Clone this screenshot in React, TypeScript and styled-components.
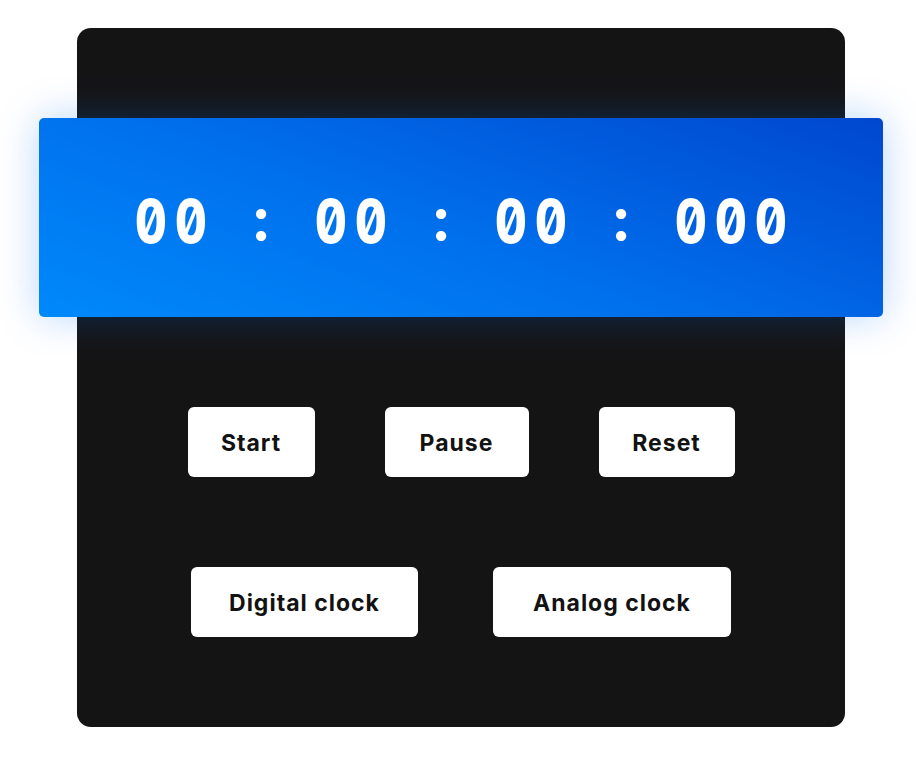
import React from "react";
import styled, { createGlobalStyle } from "styled-components";

const GlobalStyle = createGlobalStyle`
  html, body { margin: 0; padding: 0; background: #ffffff; }
  body { font-family: "Inter", "Liberation Sans", sans-serif; }
`;

const Page = styled.div`
  padding: 28px 0 31px 77px;
`;

const Card = styled.div`
  width: 768px;
  height: 699px;
  box-sizing: border-box;
  background: #151415;
  border-radius: 14px;
  padding: 90px 0;
  display: flex;
  flex-direction: column;
  align-items: center;
  gap: 90px;
`;

const Display = styled.div`
  width: 844px;
  height: 199px;
  flex-shrink: 0;
  box-sizing: border-box;
  padding-top: 6px;
  border-radius: 5px;
  background: linear-gradient(20deg, #0089fb 0%, #0070ec 45%, #0047cf 100%);
  box-shadow: 0 0 40px rgba(0, 110, 240, 0.28);
  display: flex;
  align-items: center;
  justify-content: center;
  gap: 30px;
  color: #ffffff;
  font-family: "Inter", "DejaVu Sans Mono", monospace;
  font-feature-settings: "zero" 1, "tnum" 1;
  font-weight: 800;
  font-size: 60px;
`;

const Group = styled.span<{ $cells: number }>`
  display: flex;
  width: ${(p) => p.$cells * 40}px;
`;

const Digit = styled.span`
  display: inline-block;
  width: 40px;
  text-align: center;
  transform: scaleX(0.82);
`;

const Sep = styled.span`
  width: 40px;
  text-align: center;
  font-weight: 700;
  position: relative;
  top: -3px;
`;

const Row = styled.div<{ $gap: number }>`
  display: flex;
  justify-content: center;
  gap: ${(p) => p.$gap}px;
`;

const Button = styled.button<{ $w: number }>`
  width: ${(p) => p.$w}px;
  height: 70px;
  border: none;
  border-radius: 6px;
  background: #ffffff;
  color: #121212;
  font-family: "Inter", "Liberation Sans", sans-serif;
  font-weight: 700;
  font-size: 23px;
  letter-spacing: 1px;
  padding: 2px 0 0;
  cursor: pointer;
`;

const groups = ["00", "00", "00", "000"];

export default function App() {
  return (
    <>
      <GlobalStyle />
      <Page>
        <Card>
          <Display>
            {groups.map((g, i) => (
              <React.Fragment key={i}>
                {i > 0 && <Sep>:</Sep>}
                <Group $cells={g.length}>
                  {g.split("").map((c, j) => (
                    <Digit key={j}>{c}</Digit>
                  ))}
                </Group>
              </React.Fragment>
            ))}
          </Display>
          <Row $gap={70}>
            <Button $w={127}>Start</Button>
            <Button $w={144}>Pause</Button>
            <Button $w={136}>Reset</Button>
          </Row>
          <Row $gap={75}>
            <Button $w={227}>Digital clock</Button>
            <Button $w={238}>Analog clock</Button>
          </Row>
        </Card>
      </Page>
    </>
  );
}
